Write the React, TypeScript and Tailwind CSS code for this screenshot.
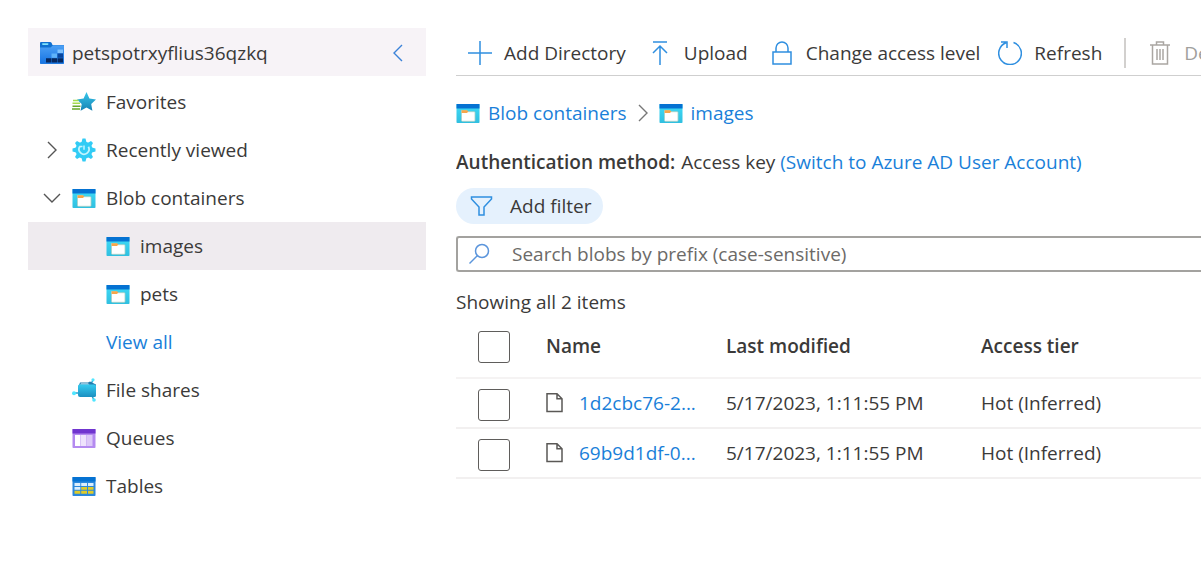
import React from "react";

type IconProps = { className?: string };

function BlobIcon({ className = "" }: IconProps) {
  return (
    <svg className={`h-[19px] w-6 shrink-0 ${className}`} viewBox="0 0 24 19" aria-hidden="true">
      <defs>
        <linearGradient id="blobBody" x1="0" y1="0" x2="0" y2="1">
          <stop offset="0" stopColor="#3fdcf7" />
          <stop offset="1" stopColor="#30bfe0" />
        </linearGradient>
      </defs>
      <rect x="0.5" y="0" width="23" height="19" rx="0.8" fill="url(#blobBody)" />
      <path d="M.5 0h23v4.5H.5z" fill="#0572d2" />
      <path d="M5.500 6.500h5.200l1.300 1.200h6.200q.8 0 .8.8v8q0 .8-.8.8H6.300q-.8 0-.8-.8z" fill="#fff" stroke="#a9cfc4" strokeWidth=".8" />
      <path d="M5.600 6.300h5.400l1.400 1.300-1.400 1.300H5.600z" fill="#f7a64a" />
    </svg>
  );
}

function StorageIcon() {
  return (
    <svg className="h-[22px] w-6 shrink-0" viewBox="0 0 24 22" aria-hidden="true">
      <defs>
        <linearGradient id="folder" x1="0" y1="0" x2="0" y2="1">
          <stop offset="0" stopColor="#4da0f5" />
          <stop offset="1" stopColor="#1573e2" />
        </linearGradient>
      </defs>
      <path d="M0 1q0-1 1-1h9q1 0 1.500.8L12.500 3H24v18q0 .8-.8.8H.8Q0 21.800 0 21z" fill="#0f6fd0" />
      <path d="M0 5.500h10.500L13 3.200h11v17.800q0 .8-.8.8H.8Q0 21.800 0 21z" fill="url(#folder)" />
      <rect x="2" y="1.300" width="6.500" height="1.600" rx=".8" fill="#7fe3fb" />
      <path d="M6 16.300h5v4.200H6zM11.500 16.300h5.500v4.200h-5.500zM17.500 16.300H23v4.200h-5.500z" fill="#06285f" />
      <path d="M17.500 11.500H23v4.300h-5.500z" fill="#0a459c" />
      <path d="M11.500 11.500H17v4.300h-5.500z" fill="#5fb3fa" />
      <path d="M17.500 7.500H23V11h-5.500z" fill="#7fc2ff" />
    </svg>
  );
}

function FavoritesIcon() {
  return (
    <svg className="h-6 w-6 shrink-0" viewBox="0 0 24 24" aria-hidden="true">
      <defs>
        <linearGradient id="star" x1="0" y1="0" x2="0" y2="1">
          <stop offset="0" stopColor="#37c6ea" />
          <stop offset="1" stopColor="#1583b5" />
        </linearGradient>
      </defs>
      <path d="M14.500 2l2.900 6.500 6.600.9-4.800 4.700 1.200 6.600-5.900-3.200-5.900 3.200 1.100-6.600L5 9.400l6.600-.9z" fill="url(#star)" />
      <path d="M1 10.500h5.500M.5 13.300h7.500" stroke="#a4dc4e" strokeWidth="1.500" />
      <path d="M.5 16.200h8M0 19h8" stroke="#66a82a" strokeWidth="1.500" />
    </svg>
  );
}

function RecentIcon() {
  return (
    <svg className="h-6 w-6 shrink-0" viewBox="0 0 24 24" aria-hidden="true">
      <g fill="#32ccf5">
        <circle cx="12" cy="12" r="8.600" />
        <path d="M9.300 5L10.500.5h3L14.700 5zM9.300 19l1.200 4.500h3l1.200-4.500zM5 9.300L.5 10.500v3L5 14.700zM19 9.300l4.500 1.200v3L19 14.700z" />
        <path d="M5.200 9L3 5 5 3l4 2.200zM18.800 9L21 5l-2-2-4 2.200zM5.200 15L3 19l2 2 4-2.200zM18.800 15l2.200 4-2 2-4-2.200z" />
      </g>
      <path d="M7.800 8.500a5 5 0 1 0 8.600.3" fill="none" stroke="#c4f5fe" strokeWidth="1.800" />
      <path d="M12 7.500v4.300M7.300 8.500h3.200" fill="none" stroke="#c4f5fe" strokeWidth="1.500" />
    </svg>
  );
}

function FileSharesIcon() {
  return (
    <svg className="h-6 w-6 shrink-0" viewBox="0 0 24 24" aria-hidden="true">
      <defs>
        <linearGradient id="share" x1="0" y1="0" x2="0" y2="1">
          <stop offset="0" stopColor="#35cbf0" />
          <stop offset="1" stopColor="#1b8fc0" />
        </linearGradient>
      </defs>
      <path d="M2 15h5M19 6l2-4M20 18l2 4" stroke="#2aa3cf" strokeWidth="1.500" />
      <path d="M8 4.500h8l2-1 6 3v2H6.500z" fill="#237cae" />
      <path d="M9 5.300h7l1.500 1.500H8z" fill="#b5d9ea" />
      <path d="M6 8q0-1.500 1.500-1.500H22q2 0 2 1.500v9.500q0 1.500-1.500 1.500H8q-2 0-2-2z" fill="url(#share)" />
      <circle cx="2" cy="15.300" r="2" fill="#50e6ff" />
      <circle cx="21" cy="1.800" r="1.600" fill="#50e6ff" />
      <circle cx="22" cy="22" r="1.800" fill="#50e6ff" />
    </svg>
  );
}

function QueuesIcon() {
  return (
    <svg className="h-[19px] w-6 shrink-0" viewBox="0 0 24 19" aria-hidden="true">
      <rect x=".5" width="23" height="19" rx=".8" fill="#b48af0" />
      <path d="M.5 0h23v4.500H.5z" fill="#7035cf" />
      <path d="M3 6h5.500v11H3z" fill="#fff" />
      <path d="M9 6h5.500v11H9z" fill="#eee3fc" />
      <path d="M15 6h5.500v11H15z" fill="#dcc8f8" />
    </svg>
  );
}

function TablesIcon() {
  return (
    <svg className="h-[19px] w-6 shrink-0" viewBox="0 0 24 19" aria-hidden="true">
      <rect x=".5" width="23" height="19" rx=".8" fill="#2b88dc" />
      <path d="M.5 0h23v4.500H.5z" fill="#0572d2" />
      <path d="M2.500 6h5.800v2.900H2.500zM9.200 6H15v2.900H9.200zM16 6h5.500v2.900H16zM2.500 9.900h5.800v2.900H2.500z" fill="#dceefc" />
      <path d="M9.200 9.900H15v2.900H9.200zM16 9.900h5.500v2.900H16zM2.500 13.800h5.800v2.900H2.500zM9.200 13.800H15v2.900H9.200zM16 13.800h5.500v2.900H16z" fill="#dfcb29" />
    </svg>
  );
}

function Chevron({ dir, className = "" }: { dir: "left" | "right" | "down"; className?: string }) {
  const paths = { left: "M14 2L6 10l8 8", right: "M6 2l8 8-8 8", down: "M2 6l8 8 8-8" };
  return (
    <svg className={`h-5 w-5 shrink-0 ${className}`} viewBox="0 0 20 20" fill="none" stroke="currentColor" strokeWidth="1.400" aria-hidden="true">
      <path d={paths[dir]} />
    </svg>
  );
}

function LineIcon({ children, className = "text-[#2f8fe0]" }: { children: React.ReactNode; className?: string }) {
  return (
    <svg className={`h-6 w-6 shrink-0 ${className}`} viewBox="0 0 24 24" fill="none" stroke="currentColor" strokeWidth="1.500" aria-hidden="true">
      {children}
    </svg>
  );
}

function NavRow({ icon, label, chevron }: { icon: React.ReactNode; label: string; chevron?: "right" | "down" }) {
  return (
    <li>
      <button type="button" className="flex h-12 w-full items-center pl-3.5 text-left">
        <span className="mr-2.5 w-5">{chevron && <Chevron dir={chevron} className="text-[#555]" />}</span>
        {icon}
        <span className="ml-2.5">{label}</span>
      </button>
    </li>
  );
}

function Check({ label }: { label: string }) {
  return (
    <input
      type="checkbox"
      aria-label={label}
      className="block h-8 w-8 appearance-none rounded-[3px] border border-[#5f5d5b] bg-white"
    />
  );
}

const blobs = [
  { name: "1d2cbc76-2...", modified: "5/17/2023, 1:11:55 PM", tier: "Hot (Inferred)" },
  { name: "69b9d1df-0...", modified: "5/17/2023, 1:11:55 PM", tier: "Hot (Inferred)" },
];

export default function App() {
  return (
    <div className="flex min-h-screen gap-[30px] overflow-hidden bg-white pt-7 pl-7 font-['Open_Sans','Noto_Sans',sans-serif] text-[19px] leading-6 text-[#3b3a39]">
      <nav aria-label="Storage" className="w-[398px] shrink-0">
        <div className="flex h-12 items-center bg-[#f7f3f7] pt-0.5 pl-3">
          <StorageIcon />
          <span className="ml-2">petspotrxyflius36qzkq</span>
          <button type="button" aria-label="Collapse" className="mr-[18px] ml-auto text-[#3b82d8]">
            <Chevron dir="left" />
          </button>
        </div>
        <ul className="pt-0.5">
          <NavRow icon={<FavoritesIcon />} label="Favorites" />
          <NavRow icon={<RecentIcon />} label="Recently viewed" chevron="right" />
          <NavRow icon={<BlobIcon />} label="Blob containers" chevron="down" />
          <li>
            <button type="button" className="flex h-12 w-full items-center gap-2.5 bg-[#efebef] pl-[78px]">
              <BlobIcon />
              images
            </button>
          </li>
          <li>
            <button type="button" className="flex h-12 w-full items-center gap-2.5 pl-[78px]">
              <BlobIcon />
              pets
            </button>
          </li>
          <li className="flex h-12 items-center pl-[78px]">
            <a href="#all" className="text-[#1a7fd9]">View all</a>
          </li>
          <NavRow icon={<FileSharesIcon />} label="File shares" />
          <NavRow icon={<QueuesIcon />} label="Queues" />
          <NavRow icon={<TablesIcon />} label="Tables" />
        </ul>
      </nav>

      <main className="min-w-0 flex-1 overflow-hidden">
        <div className="flex h-12 items-center border-b border-[#cfcfcf] pt-0.5 pl-3 whitespace-nowrap">
          <button type="button" className="flex shrink-0 items-center gap-3">
            <LineIcon><path d="M12 0v24M0 12h24" /></LineIcon>
            Add Directory
          </button>
          <button type="button" className="ml-[22px] flex shrink-0 items-center gap-3">
            <LineIcon><path d="M5 1h14M12 24V5M5 12l7-7 7 7" /></LineIcon>
            Upload
          </button>
          <button type="button" className="ml-[22px] flex shrink-0 items-center gap-3">
            <LineIcon><path d="M3 11h18v12H3zM6 11V7a6 6 0 0 1 12 0v4" /></LineIcon>
            Change access level
          </button>
          <button type="button" className="ml-[18px] flex shrink-0 items-center gap-3">
            <LineIcon><path d="M15.500 1.500A11.300 11.300 0 1 1 8 1.700M3 1h6v6" /></LineIcon>
            Refresh
          </button>
          <span className="mr-[22px] ml-[22px] h-[30px] w-0.5 shrink-0 bg-[#d2d0ce]" />
          <button type="button" disabled className="flex shrink-0 items-center gap-3 text-[#a19f9d]">
            <LineIcon className="text-[#aaa6a2]"><path d="M2 4h20M4.500 4v19h15V4M8.500 4V1h7v3M9 8v11M12 8v11M15 8v11" /></LineIcon>
            Delete
          </button>
        </div>

        <div className="flex h-[74px] items-center text-[#1a7fd9]">
          <BlobIcon />
          <a href="#containers" className="ml-2">Blob containers</a>
          <Chevron dir="right" className="mx-1.5 text-[#777]" />
          <BlobIcon />
          <a href="#images" className="ml-2">images</a>
        </div>

        <p className="whitespace-nowrap">
          <span className="mr-1.5 font-semibold">Authentication method:</span>
          Access key <a href="#switch" className="text-[#1a7fd9]">(Switch to Azure AD User Account)</a>
        </p>

        <button type="button" className="mt-3.5 flex h-9 items-center gap-4 rounded-full bg-[#e5f1fd] pr-3 pl-3.5">
          <LineIcon><path d="M1.500 3h20v2L14 13v8H9v-8L1.500 5z" /></LineIcon>
          Add filter
        </button>

        <div className="mt-3 flex h-9 items-center gap-5 rounded-l-[3px] border-2 border-r-0 border-[#a3a29f] pl-2.5">
          <LineIcon className="text-[#5b95dc]"><path d="M9.500 13.500L1.500 21.500" /><circle cx="14" cy="9" r="6.500" /></LineIcon>
          <input
            type="text"
            aria-label="Search blobs"
            placeholder="Search blobs by prefix (case-sensitive)"
            className="min-w-0 flex-1 bg-transparent outline-none placeholder:text-[#6c6a68]"
          />
        </div>

        <p className="mt-[18px]">Showing all 2 items</p>

        <table className="w-full table-fixed border-collapse text-left">
          <thead>
            <tr className="h-16 border-b-2 border-[#f5f3f3]">
              <th className="w-[90px] pt-0.5 pl-[22px]"><Check label="Select all" /></th>
              <th className="w-[180px] font-semibold">Name</th>
              <th className="w-[255px] font-semibold">Last modified</th>
              <th className="font-semibold">Access tier</th>
            </tr>
          </thead>
          <tbody>
            {blobs.map((b) => (
              <tr key={b.name} className="h-[50px] border-b-2 border-[#f2f0f0]">
                <td className="pt-1 pl-[22px]"><Check label={b.name} /></td>
                <td>
                  <a href="#blob" className="flex items-center gap-[15px] text-[#1a7fd9]">
                    <svg className="h-5 w-[18px] shrink-0 text-[#5a5856]" viewBox="0 0 18 20" fill="none" stroke="currentColor" strokeWidth="1.500" aria-hidden="true">
                      <path d="M1 .8h10l5 5v12.700H1zM11 .8v5h5" />
                    </svg>
                    {b.name}
                  </a>
                </td>
                <td>{b.modified}</td>
                <td>{b.tier}</td>
              </tr>
            ))}
          </tbody>
        </table>
      </main>
    </div>
  );
}
